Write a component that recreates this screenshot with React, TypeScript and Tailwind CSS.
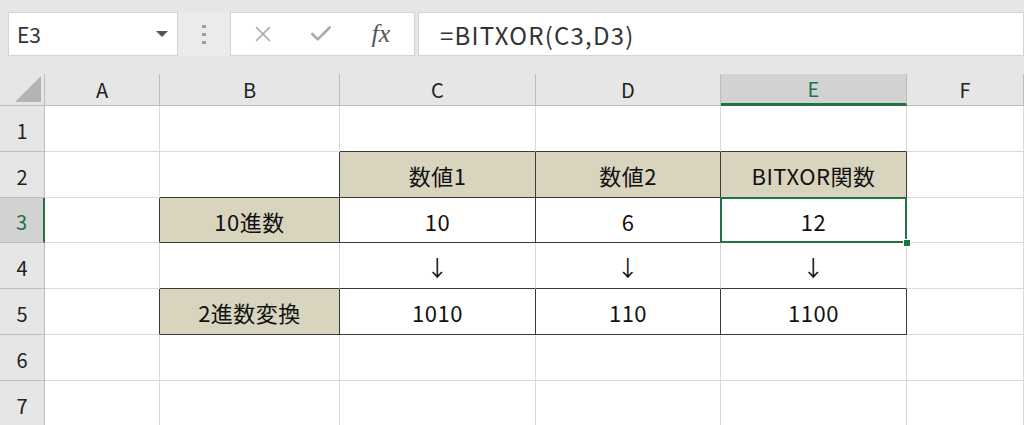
import { Fragment } from 'react'
import { X, Check } from 'lucide-react'

const cols = ['A', 'B', 'C', 'D', 'E', 'F']
const rows = [1, 2, 3, 4, 5, 6, 7]

// cells with dark table borders, keyed "row-col"
const table: Record<string, { text: string; fill?: boolean }> = {
  '2-C': { text: '数値1', fill: true },
  '2-D': { text: '数値2', fill: true },
  '2-E': { text: 'BITXOR関数', fill: true },
  '3-B': { text: '10進数', fill: true },
  '3-C': { text: '10' },
  '3-D': { text: '6' },
  '3-E': { text: '12' },
  '5-B': { text: '2進数変換', fill: true },
  '5-C': { text: '1010' },
  '5-D': { text: '110' },
  '5-E': { text: '1100' },
}

const plain: Record<string, string> = {
  '4-C': '↓',
  '4-D': '↓',
  '4-E': '↓',
}

const isTable = (r: number, c: number) => !!table[`${r}-${cols[c]}`]

const Cell = ({ r, c }: { r: number; c: number }) => {
  const key = `${r}-${cols[c]}`
  const cell = table[key]
  const darkRight = isTable(r, c) || isTable(r, c + 1)
  const darkBottom = isTable(r, c) || isTable(r + 1, c)
  const selected = r === 3 && cols[c] === 'E'
  return (
    <div
      className={`relative flex items-center justify-center border-r border-b text-[22px] tracking-[0.5px] text-[#111] ${
        darkRight ? 'border-r-[#3a3a3a]' : 'border-r-[#dadada]'
      } ${darkBottom ? 'border-b-[#3a3a3a]' : 'border-b-[#dadada]'} ${cell?.fill ? 'bg-[#d8d4bd]' : 'bg-white'} ${
        selected ? 'z-10' : ''
      }`}
    >
      <span className="pt-0.5">{cell ? cell.text : plain[key] ?? ''}</span>
      {selected && (
        <>
          <div className="absolute -left-px -top-px -right-px -bottom-px border-2 border-[#217346]" />
          <div className="absolute -right-[5px] -bottom-[5px] w-[8px] h-[8px] bg-[#217346] border border-white" />
        </>
      )}
    </div>
  )
}

const App = () => {
  return (
    <div
      className="w-[1024px] h-[425px] overflow-hidden bg-white"
      style={{ fontFamily: '"Noto Sans CJK JP", "Noto Sans", sans-serif' }}
    >
      {/* formula bar */}
      <div className="h-[74px] bg-[#e6e6e6] flex items-start pt-[12px] pl-[8px]">
        <div className="w-[170px] h-[44px] bg-white border border-[#d4d4d4] flex items-center justify-between pl-[8px] pr-[9px]">
          <span className="text-[21px] text-[#333] pt-0.5">E3</span>
          <div className="w-0 h-0 border-l-[6px] border-r-[6px] border-t-[6px] border-l-transparent border-r-transparent border-t-[#555]" />
        </div>
        <div className="w-[52px] h-[44px] flex flex-col items-center justify-center gap-[5px] bg-[#ebebeb]">
          <div className="w-[4px] h-[3px] bg-[#a0a0a0]" />
          <div className="w-[4px] h-[3px] bg-[#a0a0a0]" />
          <div className="w-[4px] h-[3px] bg-[#a0a0a0]" />
        </div>
        <div className="w-[185px] h-[44px] bg-white border border-[#d4d4d4] flex items-center">
          <div className="w-[60px] flex justify-center pl-[3px]">
            <X className="w-[26px] h-[26px] text-[#ababab]" strokeWidth={1.6} />
          </div>
          <div className="w-[60px] flex justify-center">
            <Check className="w-[26px] h-[26px] text-[#ababab]" strokeWidth={2.4} />
          </div>
          <div className="w-[60px] flex justify-center">
            <span
              className="italic text-[26px] text-[#555] leading-none"
              style={{ fontFamily: '"Liberation Serif", serif' }}
            >
              fx
            </span>
          </div>
        </div>
        <div className="flex-1 h-[44px] ml-[3px] bg-white border border-[#d4d4d4] flex items-center pl-[21px]">
          <span className="text-[24px] tracking-[1.2px] text-[#333] pt-0.5">=BITXOR(C3,D3)</span>
        </div>
      </div>

      {/* sheet */}
      <div className="grid grid-cols-[45px_115px_180px_196px_185px_186px_1fr] grid-rows-[32px_46px_46px_45px_46px_46px_46px_46px]">
        <div className="relative bg-[#e6e6e6] border-r border-b border-[#bdbdbd]">
          <div className="absolute right-[3px] bottom-[3px] w-0 h-0 border-b-[26px] border-l-[26px] border-b-[#b3b3b3] border-l-transparent" />
        </div>
        {cols.map((c) =>
          c === 'E' ? (
            <div
              key={c}
              className="bg-[#d2d2d2] border-r border-r-[#bdbdbd] border-b-[3px] border-b-[#217346] flex items-center justify-center text-[20px] text-[#217346]"
            >
              {c}
            </div>
          ) : (
            <div
              key={c}
              className="bg-[#e6e6e6] border-r border-b border-[#bdbdbd] flex items-center justify-center text-[20px] text-[#222]"
            >
              {c}
            </div>
          )
        )}
        {rows.map((r) => (
          <Fragment key={r}>
            {r === 3 ? (
              <div className="bg-[#d2d2d2] border-r-2 border-r-[#217346] border-b border-b-[#bdbdbd] flex items-end justify-center pb-[5px] text-[20px] text-[#217346]">
                {r}
              </div>
            ) : (
              <div className="bg-[#e6e6e6] border-r border-b border-[#bdbdbd] flex items-end justify-center pb-[5px] text-[20px] text-[#222]">
                {r}
              </div>
            )}
            {cols.map((_, ci) => (
              <Cell key={`${r}-${ci}`} r={r} c={ci} />
            ))}
          </Fragment>
        ))}
      </div>
    </div>
  )
}

export default App
